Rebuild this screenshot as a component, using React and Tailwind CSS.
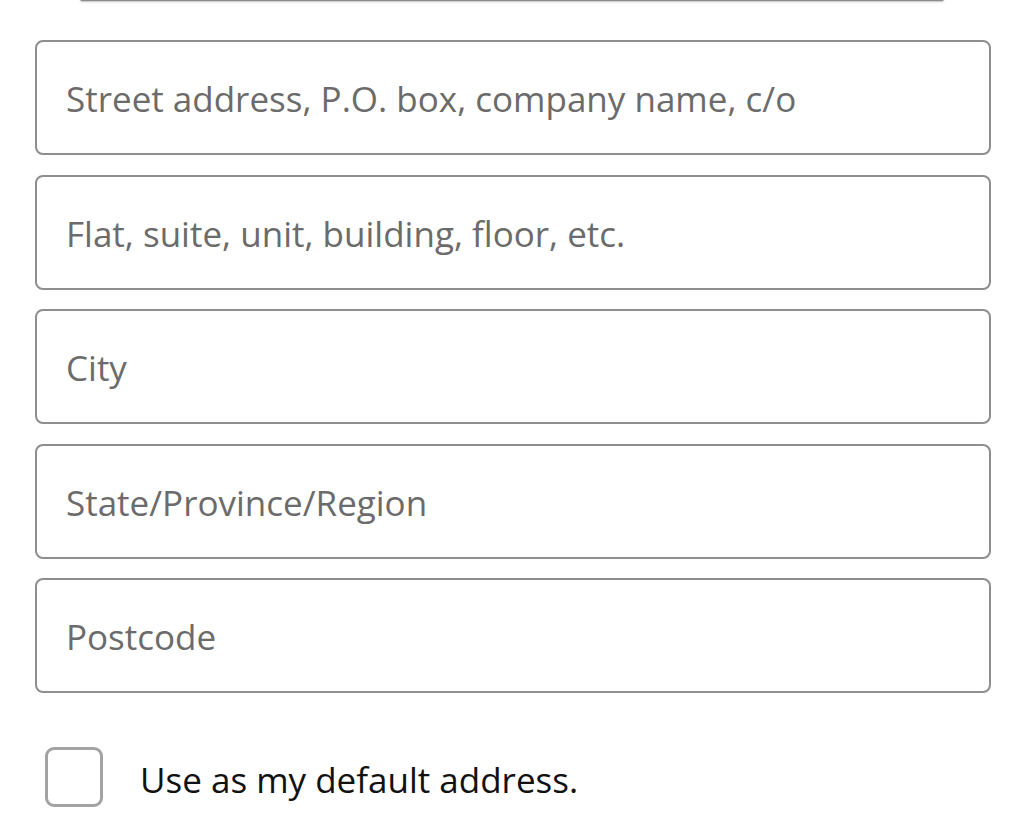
import { useState } from 'react'

const fields = [
  'Street address, P.O. box, company name, c/o',
  'Flat, suite, unit, building, floor, etc.',
  'City',
  'State/Province/Region',
  'Postcode',
]

export default function App() {
  const [checked, setChecked] = useState(false)

  return (
    <div className="w-[1024px] h-[832px] bg-white overflow-hidden font-['Open_Sans','Noto_Sans',sans-serif]">
      <div className="mx-[80px] h-[2px] -mt-[1px] rounded-b-lg bg-[#8a8a8a] shadow-[0_1px_2px_rgba(0,0,0,0.25)]" />

      <div className="pl-[35px] pr-[33px] pt-[39px] flex flex-col gap-[19.5px]">
        {fields.map((label) => (
          <input
            key={label}
            type="text"
            placeholder={label}
            className="w-full h-[115px] rounded-[8px] border-2 border-[#8e8e8e] pl-[29px] pt-[2px] text-[35px] text-[#222] placeholder:text-[#6b6b6b] outline-none"
          />
        ))}
      </div>

      <label className="flex items-center gap-[37px] pl-[45px] mt-[54px] cursor-pointer">
        <button
          type="button"
          onClick={() => setChecked(!checked)}
          className="w-[58px] h-[60px] rounded-[9px] border-[3px] border-[#a3a3a3] bg-white"
        />
        <span className="text-[35px] text-[#111] leading-none pt-[4px]">Use as my default address.</span>
      </label>
    </div>
  )
}
